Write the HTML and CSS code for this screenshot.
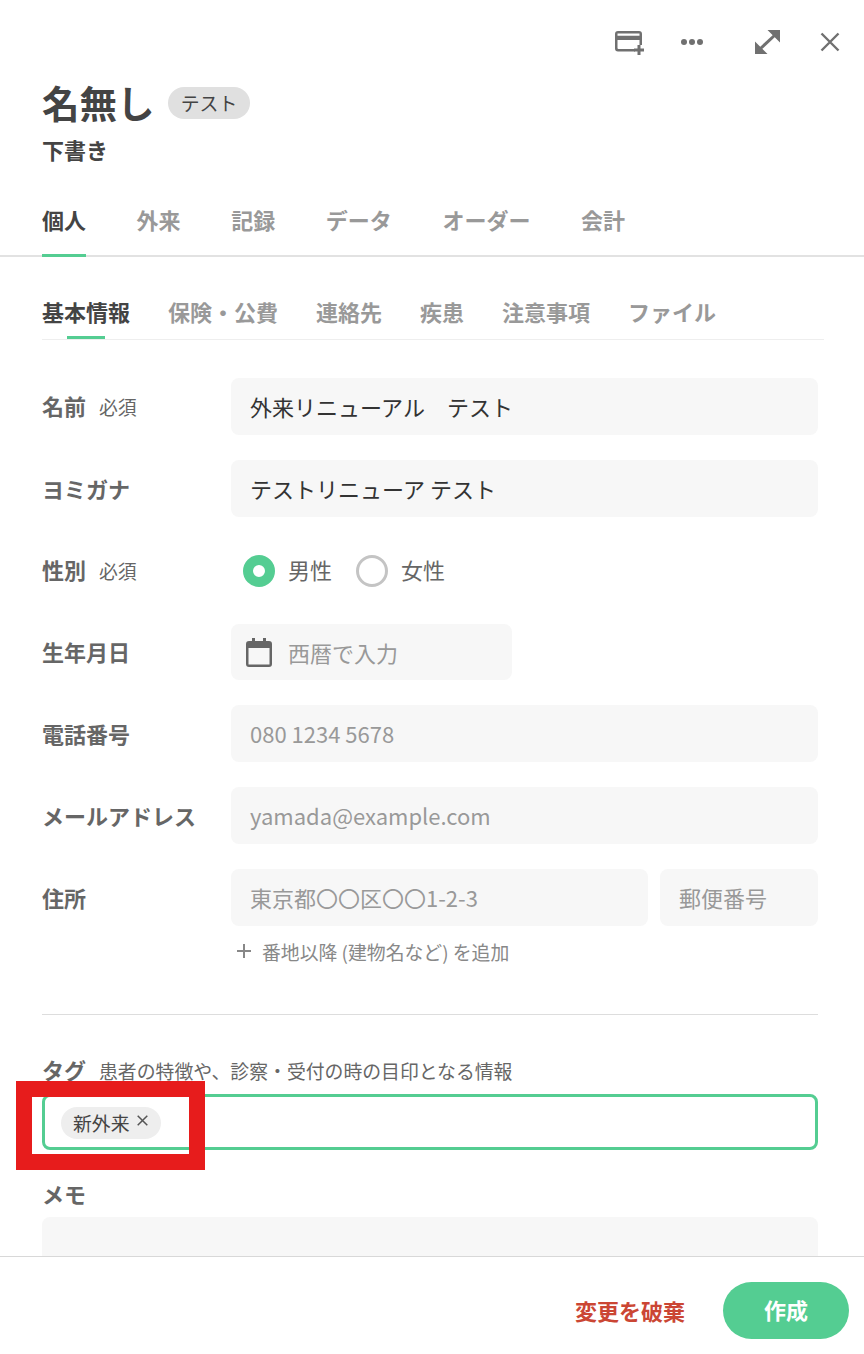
FILE: index.html
```html
<!DOCTYPE html>
<html lang="ja">
<head>
<meta charset="utf-8">
<title>名無し</title>
<link rel="stylesheet" href="styles.css">
</head>
<body>
<div class="page">
  <div class="scroll">
    <div class="toolbar">
      <svg class="tool-a" width="30" height="24" viewBox="0 0 30 24"><path fill-rule="evenodd" d="M3 0h21a3 3 0 0 1 3 3v11h-2.500V9H2.500v8a1 1 0 0 0 1 1H20v2.500H3a3 3 0 0 1-3-3V3a3 3 0 0 1 3-3zM2.500 2.500v2.300h22V2.500z" fill="#707070"/><path d="M22.500 14h3v3.500H29v3h-3.500V24h-3v-3.500H19v-3h3.500z" fill="#707070"/></svg>
      <svg class="tool-b" width="22" height="6" viewBox="0 0 22 6"><circle cx="3" cy="3" r="3" fill="#707070"/><circle cx="11" cy="3" r="3" fill="#707070"/><circle cx="19" cy="3" r="3" fill="#707070"/></svg>
      <svg class="tool-c" width="25" height="24" viewBox="0 0 25 24"><path d="M12.500 0H25v12.500zM0 11.500V24h12.500z" fill="#707070"/><path d="M5 19L20 5" stroke="#707070" stroke-width="3" fill="none"/></svg>
      <svg class="tool-d" width="20" height="20" viewBox="0 0 20 20"><path d="M1.500 1.500l17 17M18.500 1.500l-17 17" stroke="#707070" stroke-width="2.400" fill="none"/></svg>
    </div>
    <div class="title-row"><h1 class="title">名無し</h1><span class="badge">テスト</span></div>
    <div class="status">下書き</div>
    <nav class="tabs">
      <span class="tab active">個人</span><span class="tab">外来</span><span class="tab">記録</span><span class="tab">データ</span><span class="tab">オーダー</span><span class="tab">会計</span>
    </nav>
    <div class="subwrap">
      <nav class="subtabs">
        <span class="subtab active">基本情報</span><span class="subtab">保険・公費</span><span class="subtab">連絡先</span><span class="subtab">疾患</span><span class="subtab">注意事項</span><span class="subtab">ファイル</span>
      </nav>
    </div>
    <form class="form">
      <div class="row"><div class="label">名前<small>必須</small></div><div class="field fill dark">外来リニューアル　テスト</div></div>
      <div class="row"><div class="label">ヨミガナ</div><div class="field fill dark">テストリニューア テスト</div></div>
      <div class="row"><div class="label">性別<small>必須</small></div>
        <div class="radios">
          <span class="radio on"></span><span class="radio-text">男性</span>
          <span class="radio"></span><span class="radio-text">女性</span>
        </div>
      </div>
      <div class="row short"><div class="label">生年月日</div>
        <div class="field date">
          <svg width="26" height="29" viewBox="0 0 26 29"><path d="M6 0h3v3h8V0h3v3h3a3 3 0 0 1 3 3v20a3 3 0 0 1-3 3H3a3 3 0 0 1-3-3V6a3 3 0 0 1 3-3h3zM2.500 10v16.500h21V10z" fill="#666"/></svg>
          <span>西暦で入力</span>
        </div>
      </div>
      <div class="row"><div class="label">電話番号</div><div class="field fill">080 1234 5678</div></div>
      <div class="row"><div class="label">メールアドレス</div><div class="field fill">yamada@example.com</div></div>
      <div class="row addr"><div class="label">住所</div>
        <div class="addr-fields"><div class="field fill">東京都〇〇区〇〇1-2-3</div><div class="field zip">郵便番号</div></div>
      </div>
      <div class="add-line"><svg width="16" height="16" viewBox="0 0 16 16"><path d="M8 1v14M1 8h14" stroke="#888" stroke-width="2" fill="none"/></svg><span>番地以降 (建物名など) を追加</span></div>
      <hr class="sep">
      <div class="tag-head"><span class="label-inline">タグ</span><small>患者の特徴や、診察・受付の時の目印となる情報</small></div>
      <div class="tag-box"><span class="chip">新外来<svg width="11" height="11" viewBox="0 0 11 11"><path d="M.7.7l9.600 9.600M10.300.7L.7 10.300" stroke="#555" stroke-width="1.500" fill="none"/></svg></span></div>
      <div class="memo-label">メモ</div>
      <div class="memo"></div>
    </form>
  </div>
  <footer class="footer"><span class="discard">変更を破棄</span><span class="create">作成</span></footer>
  <div class="marker"></div>
</div>
</body>
</html>
```
FILE: styles.css
```css
* { box-sizing: border-box; }
html, body { margin: 0; padding: 0; background: #fff; }
body { font-family: "Noto Sans CJK JP", sans-serif; color: #444; }
.page { position: relative; width: 864px; height: 1354px; overflow: hidden; display: flex; flex-direction: column; }
.scroll { flex: 1; min-height: 0; overflow: hidden; }
.toolbar { display: flex; align-items: center; height: 83px; padding: 1px 23px 0 615px; }
.tool-a { margin-top: 2px; }
.tool-b { margin-left: 36px; }
.tool-c { margin-left: 52px; }
.tool-d { margin-left: 40px; }
.title-row { display: flex; align-items: center; padding-left: 42px; height: 40px; }
.title { margin: -2px 0 0; font-size: 37.500px; line-height: 40px; font-weight: 700; color: #444; }
.badge { margin-left: 13.500px; margin-top: -1px; height: 32px; width: 82px; border-radius: 16px; background: #e0e0e0; font-size: 18.850px; line-height: 32px; text-align: center; color: #444; }
.status { padding-left: 42px; margin-top: 10px; font-size: 22px; line-height: 32px; font-weight: 700; color: #444; }
.tabs { display: flex; gap: 50.600px; padding: 35px 0 0 42px; height: 89px; margin-top: 3px; border-bottom: 2px solid #e2e2e2; align-items: flex-start; }
.tab { font-size: 22px; line-height: 32px; font-weight: 700; color: #999; padding-bottom: 19px; }
.tab.active { color: #444; border-bottom: 3px solid #54cd92; }
.subwrap { padding: 0 40px 0 42px; margin-top: 38px; }
.subtabs { display: flex; gap: 38px; height: 45px; border-bottom: 1px solid #eee; }
.subtab { position: relative; font-size: 22px; line-height: 32px; font-weight: 700; color: #999; }
.subtab.active { color: #444; }
.subtab.active::after { content: ""; position: absolute; left: 25px; top: 41px; width: 38px; height: 3px; background: #54cd92; }
.form { padding: 38px 46px 0 42px; }
.row { display: flex; align-items: center; height: 57px; margin-bottom: 25px; }
.row.short { height: 56px; }
.row.addr { margin-bottom: 0; }
.label { flex: 0 0 189px; font-size: 22px; line-height: 32px; font-weight: 700; color: #666; padding-bottom: 2px; }
.label small, .tag-head small { font-size: 18.850px; font-weight: 400; color: #666; margin-left: 13px; }
.field { height: 57px; background: #f7f7f7; border-radius: 8px; padding: 0 19px; font-size: 22px; line-height: 57px; color: #999; white-space: nowrap; }
.fill { flex: 1; }
.dark { color: #333; line-height: 56px; }
.radios { display: flex; align-items: center; padding-left: 12px; font-size: 22px; line-height: 32px; color: #666; }
.radio { width: 32px; height: 32px; border-radius: 50%; border: 3px solid #c4c4c4; }
.radio.on { border: 10px solid #54cd92; background: #fff; }
.radio-text { margin-left: 13px; margin-right: 24px; padding-bottom: 4px; }
.date { width: 281px; height: 56px; display: flex; align-items: center; padding-left: 15px; line-height: 54px; }
.date svg { flex: none; margin-right: 16px; }
.addr-fields { flex: 1; display: flex; gap: 12px; }
.zip { flex: 0 0 158px; }
.add-line { display: flex; align-items: center; margin-left: 189px; margin-top: 9px; padding-left: 5px; height: 32px; font-size: 18.850px; color: #888; }
.add-line span { margin-left: 10px; }
.sep { margin: 47px 0 0; border: 0; border-top: 1px solid #ddd; }
.tag-head { margin-top: 38px; height: 32px; line-height: 32px; white-space: nowrap; }
.label-inline { font-size: 22px; font-weight: 700; color: #666; }
.tag-box { margin-top: 9px; height: 56px; border: 3px solid #54cd92; border-radius: 8px; padding: 10px 0 0 16px; }
.chip { display: inline-flex; align-items: center; height: 32px; padding: 0 13px 0 12px; border-radius: 16px; background: #eee; font-size: 18.850px; line-height: 32px; color: #444; }
.chip svg { margin-left: 7px; margin-top: -5px; }
.memo-label { margin-top: 27px; font-size: 22px; line-height: 32px; font-weight: 700; color: #666; }
.memo { margin-top: 8px; height: 80px; background: #f7f7f7; border-radius: 8px; }
.footer { flex: none; height: 98px; border-top: 1px solid #d8d8d8; display: flex; align-items: center; justify-content: flex-end; padding: 10px 15px 0 0; background: #fff; position: relative; }
.discard { font-size: 22px; font-weight: 700; color: #cb4634; margin: 0 38px 2px 0; }
.create { width: 126px; height: 57px; border-radius: 29px; background: #54cd92; color: #fff; font-size: 22px; font-weight: 700; line-height: 55px; text-align: center; }
.marker { position: absolute; left: 16px; top: 1081px; width: 189px; height: 89px; border: 16px solid #e71c1c; }
```
